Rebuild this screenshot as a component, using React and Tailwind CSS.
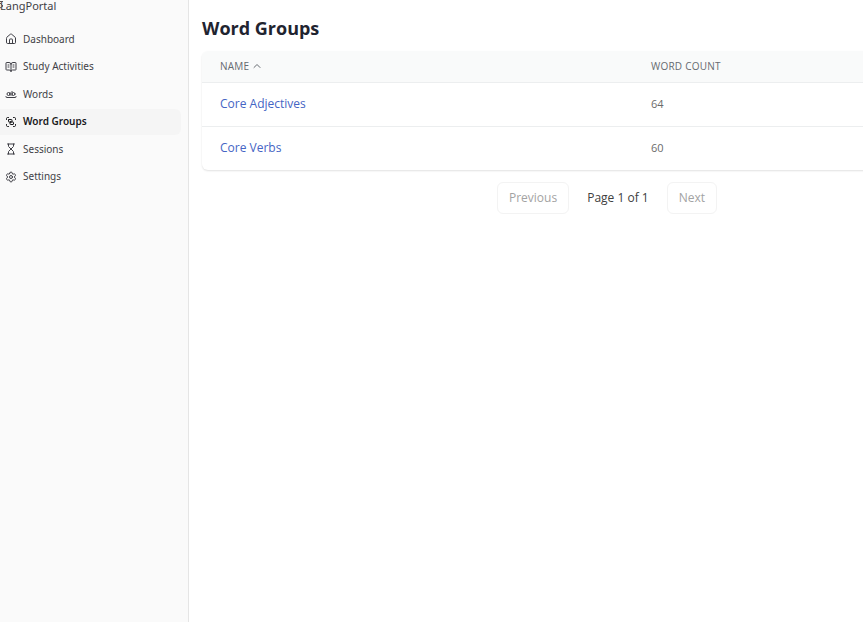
import { House, BookOpenText, WholeWord, Group, Hourglass, Settings, ChevronUp } from "lucide-react";

const links = [
  { label: "Dashboard", icon: House },
  { label: "Study Activities", icon: BookOpenText },
  { label: "Words", icon: WholeWord },
  { label: "Word Groups", icon: Group, active: true },
  { label: "Sessions", icon: Hourglass },
  { label: "Settings", icon: Settings },
];

const groups = [
  { name: "Core Adjectives", count: 64 },
  { name: "Core Verbs", count: 60 },
];

function Sidebar() {
  return (
    <aside className="w-[189px] shrink-0 border-r border-[#e5e5e5] bg-[#fafafa] font-['Noto_Sans','Open_Sans',sans-serif] text-[#3f3f46]">
      <div className="relative h-[26px]">
        <span className="block text-[11px] leading-3">LangPortal</span>
        <svg className="absolute top-0 left-0 h-3 w-1" viewBox="0 0 4 12" fill="none" stroke="#555" aria-hidden="true">
          <path d="M0 1.500h3M0 3l3 3-3 2" />
        </svg>
      </div>
      <nav className="flex h-[164px] flex-col justify-between pr-[7px]">
        {links.map(({ label, icon: Icon, active }) => (
          <a
            key={label}
            href="#"
            aria-current={active ? "page" : undefined}
            className={
              active
                ? "flex h-[26px] items-center gap-[6px] rounded-r-md bg-[#f5f5f5] pl-[5px] text-[10px] font-semibold text-[#18181b]"
                : "flex h-[26px] items-center gap-[6px] rounded-r-md pl-[5px] text-[10px]"
            }
          >
            <Icon size={12} strokeWidth={2} />
            <span>{label}</span>
          </a>
        ))}
      </nav>
    </aside>
  );
}

function GroupsTable() {
  return (
    <div className="overflow-hidden rounded-md bg-white shadow-[0_1px_2px_rgba(0,0,0,0.12)]">
      <table className="w-full table-fixed text-left">
        <thead className="border-b border-[#eceeef] bg-[#f9fafa] text-[10px] text-[#666a70]">
          <tr className="h-[31px]">
            <th className="w-[53.2%] px-[18px] font-medium tracking-wide">
              <button className="flex items-center gap-[2px] font-medium tracking-wide">
                NAME <ChevronUp size={12} />
              </button>
            </th>
            <th className="px-[18px] font-medium tracking-wide">WORD COUNT</th>
          </tr>
        </thead>
        <tbody className="divide-y divide-[#eceeef]">
          {groups.map((g) => (
            <tr key={g.name} className="h-11">
              <td className="px-[18px] text-[12px]">
                <a href="#" className="text-[#4565c4]">{g.name}</a>
              </td>
              <td className="px-[18px] text-[11px] text-[#6b6b6b]">{g.count}</td>
            </tr>
          ))}
        </tbody>
      </table>
    </div>
  );
}

export default function App() {
  return (
    <div className="flex min-h-screen overflow-hidden bg-white font-['Open_Sans','Noto_Sans',sans-serif]">
      <Sidebar />
      <main className="min-w-0 flex-1 pt-4 pl-[13px]">
        <div className="-mr-[149px]">
          <h1 className="mb-[11px] text-[18px] leading-6 font-bold text-[#1f2430]">Word Groups</h1>
          <GroupsTable />
          <div className="mt-3 flex items-center justify-center gap-[18px] text-[12px]">
            <button disabled className="h-8 rounded-md border border-[#f3f3f3] px-[11px] text-[#a3a3a3]">Previous</button>
            <span className="text-[#404040]">Page 1 of 1</span>
            <button disabled className="h-8 rounded-md border border-[#f3f3f3] px-[11px] text-[#a3a3a3]">Next</button>
          </div>
        </div>
      </main>
    </div>
  );
}
